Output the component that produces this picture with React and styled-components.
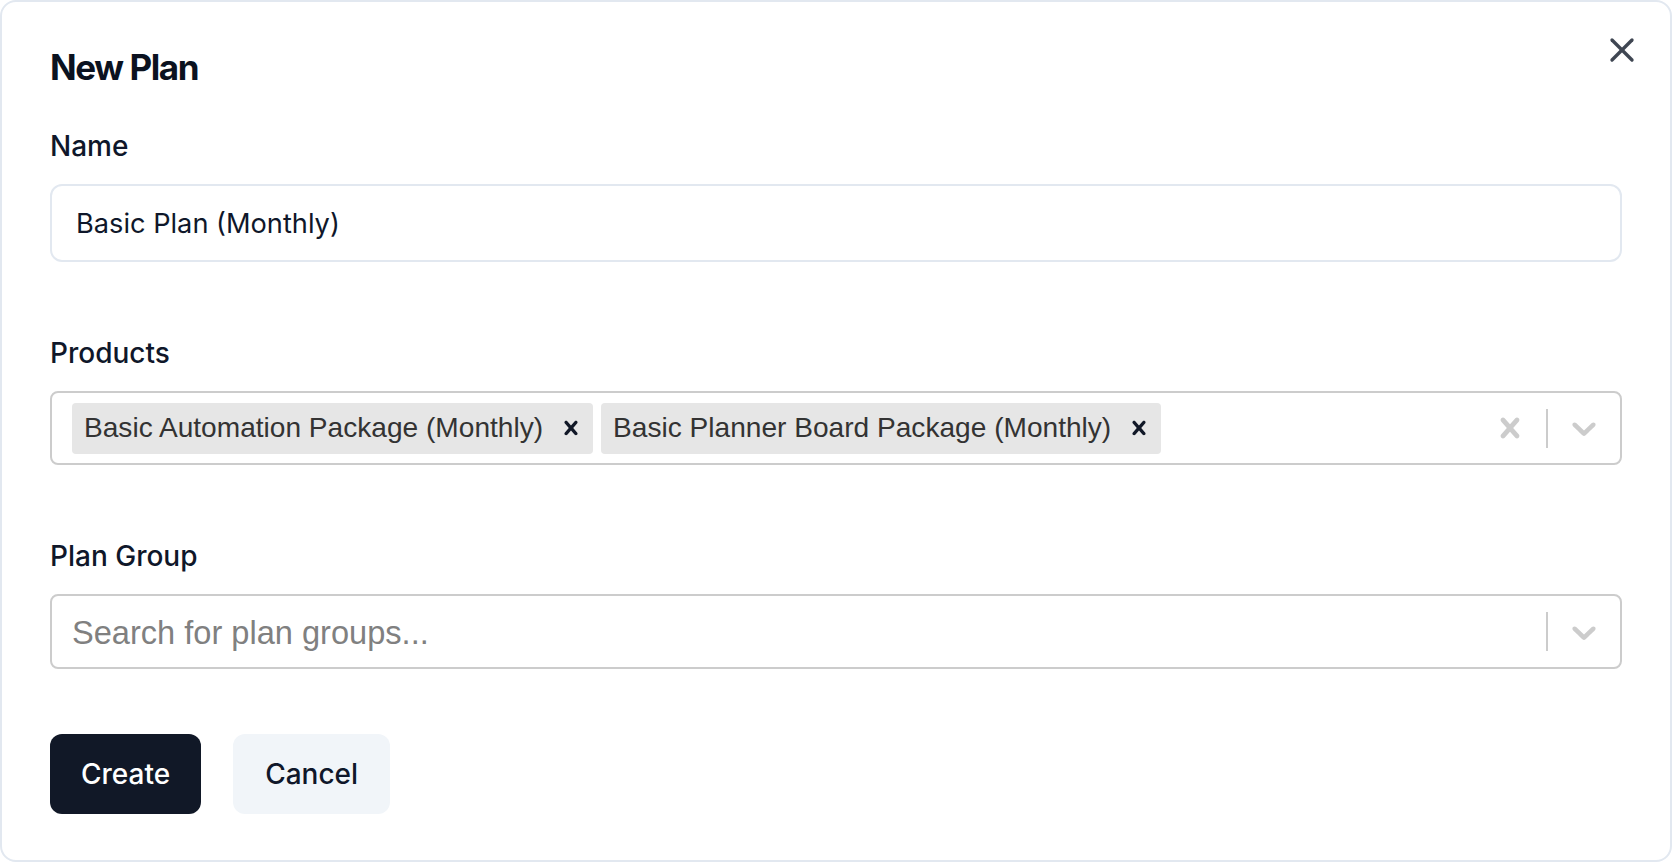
import React from "react";
import styled, { createGlobalStyle } from "styled-components";
import { X } from "lucide-react";

const GlobalStyle = createGlobalStyle`
  html, body {
    margin: 0;
    padding: 0;
    background: #ffffff;
  }
  * {
    box-sizing: border-box;
  }
`;

const Card = styled.div`
  position: relative;
  width: 100%;
  padding: 47px 48px 46px 48px;
  border: 2px solid #e2e8f0;
  border-radius: 16px;
  background: #ffffff;
  font-family: Inter, "Liberation Sans", sans-serif;
  color: #0f172a;
`;

const CloseButton = styled.button`
  position: absolute;
  top: 28px;
  right: 28px;
  width: 40px;
  height: 40px;
  padding: 0;
  border: 0;
  background: none;
  color: #3f4652;
  display: flex;
  align-items: center;
  justify-content: center;
  cursor: pointer;
`;

const Title = styled.h2`
  margin: 0 0 47px 0;
  font-size: 35px;
  line-height: 36px;
  font-weight: 700;
  letter-spacing: -1.4px;
  color: #0b1220;
`;

const Form = styled.form`
  display: flex;
  flex-direction: column;
  gap: 77px;
`;

const Field = styled.div`
  display: flex;
  flex-direction: column;
  gap: 24px;
`;

const Label = styled.label`
  font-size: 28px;
  line-height: 28px;
  font-weight: 500;
  color: #0f172a;
`;

const TextInput = styled.input`
  height: 78px;
  width: 100%;
  padding: 0 24px;
  border: 2px solid #e2e8f0;
  border-radius: 12px;
  font-family: Inter, sans-serif;
  font-size: 27.2px;
  color: #0f172a;
  background: #ffffff;
  outline: none;
`;

const SelectBox = styled.div`
  display: flex;
  align-items: center;
  height: ${(p) => p.$height || 74}px;
  border: 2px solid #cccccc;
  border-radius: 8px;
  background: #ffffff;
  font-family: "Liberation Sans", Arial, sans-serif;
`;

const ValueArea = styled.div`
  flex: 1;
  display: flex;
  align-items: center;
  flex-wrap: wrap;
  padding: 4px 16px;
  min-width: 0;
`;

const Chip = styled.div`
  display: flex;
  align-items: stretch;
  height: 51px;
  margin: 4px;
  border-radius: 4px;
  background: #e6e6e6;
`;

const ChipLabel = styled.span`
  display: flex;
  align-items: center;
  padding: 0 6px 0 12px;
  font-size: 28.1px;
  color: #333333;
  white-space: nowrap;
`;

const ChipRemove = styled.span`
  display: flex;
  align-items: center;
  padding: 0 8px;
  color: #111827;
  border-radius: 4px;
  cursor: pointer;
`;

const Placeholder = styled.span`
  margin: 2px 4px 0 4px;
  font-size: 32.6px;
  color: #808080;
  white-space: nowrap;
`;

const Indicators = styled.div`
  display: flex;
  align-items: center;
  align-self: stretch;
`;

const Indicator = styled.div`
  display: flex;
  align-items: center;
  padding: 16px;
  color: #cccccc;
`;

const Separator = styled.span`
  align-self: center;
  width: 2px;
  height: 39px;
  background: #cccccc;
`;

const Actions = styled.div`
  display: flex;
  gap: 32px;
  margin-top: 65px;
`;

const Button = styled.button`
  height: 80px;
  padding: 0 ${(p) => (p.$variant === "primary" ? 31 : 32)}px;
  border: 0;
  border-radius: 12px;
  font-family: Inter, sans-serif;
  font-size: 28px;
  font-weight: 500;
  cursor: pointer;
  background: ${(p) => (p.$variant === "primary" ? "#111827" : "#f1f5f9")};
  color: ${(p) => (p.$variant === "primary" ? "#ffffff" : "#0f172a")};
`;

const CrossIcon = ({ size }) => (
  <svg width={size} height={size} viewBox="0 0 20 20" fill="currentColor" aria-hidden="true">
    <path d="M14.348 14.849c-0.469 0.469-1.229 0.469-1.697 0l-2.651-3.030-2.651 3.029c-0.469 0.469-1.229 0.469-1.697 0-0.469-0.469-0.469-1.229 0-1.697l2.758-3.15-2.759-3.152c-0.469-0.469-0.469-1.228 0-1.697s1.228-0.469 1.697 0l2.652 3.031 2.651-3.031c0.469-0.469 1.228-0.469 1.697 0s0.469 1.229 0 1.697l-2.758 3.152 2.758 3.15c0.469 0.469 0.469 1.229 0 1.698z" />
  </svg>
);

const ChevronIcon = () => (
  <svg width="40" height="40" viewBox="0 0 20 20" fill="currentColor" aria-hidden="true">
    <path d="M4.516 7.548c0.436-0.446 1.043-0.481 1.576 0l3.908 3.747 3.908-3.747c0.533-0.481 1.141-0.446 1.574 0 0.436 0.445 0.408 1.197 0 1.615-0.406 0.418-4.695 4.502-4.695 4.502-0.217 0.223-0.502 0.335-0.787 0.335s-0.57-0.112-0.789-0.335c0 0-4.287-4.084-4.695-4.502s-0.436-1.17 0-1.615z" />
  </svg>
);

const products = [
  "Basic Automation Package (Monthly)",
  "Basic Planner Board Package (Monthly)",
];

export default function App() {
  return (
    <>
      <GlobalStyle />
      <Card>
        <CloseButton aria-label="Close">
          <X size={40} strokeWidth={2} />
        </CloseButton>
        <Title>New Plan</Title>
        <Form onSubmit={(e) => e.preventDefault()}>
          <Field>
            <Label>Name</Label>
            <TextInput defaultValue="Basic Plan (Monthly)" />
          </Field>

          <Field>
            <Label>Products</Label>
            <SelectBox>
              <ValueArea>
                {products.map((p) => (
                  <Chip key={p}>
                    <ChipLabel>{p}</ChipLabel>
                    <ChipRemove>
                      <CrossIcon size={28} />
                    </ChipRemove>
                  </Chip>
                ))}
              </ValueArea>
              <Indicators>
                <Indicator>
                  <CrossIcon size={40} />
                </Indicator>
                <Separator />
                <Indicator>
                  <ChevronIcon />
                </Indicator>
              </Indicators>
            </SelectBox>
          </Field>

          <Field>
            <Label>Plan Group</Label>
            <SelectBox $height={75}>
              <ValueArea>
                <Placeholder>Search for plan groups...</Placeholder>
              </ValueArea>
              <Indicators>
                <Separator />
                <Indicator>
                  <ChevronIcon />
                </Indicator>
              </Indicators>
            </SelectBox>
          </Field>
        </Form>
        <Actions>
          <Button $variant="primary">Create</Button>
          <Button>Cancel</Button>
        </Actions>
      </Card>
    </>
  );
}
